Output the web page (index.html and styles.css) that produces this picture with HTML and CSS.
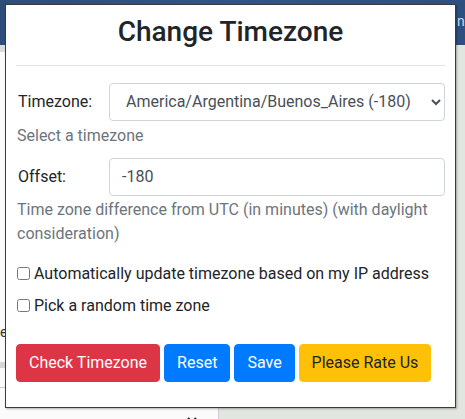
FILE: index.html
```html
<!DOCTYPE html>
<html>
<head>
<meta charset="utf-8">
<link rel="stylesheet" href="styles.css">
</head>
<body>
<div class="page">
  <div class="page-header"><span class="header-text">n</span></div>
  <div class="page-main">
    <div class="sidebar">
      <div class="sidebar-band"></div>
      <div class="sidebar-text">e</div>
      <div class="sidebar-band2"></div>
      <div class="sidebar-line"></div>
      <div class="sidebar-select"><svg width="10" height="7" viewBox="0 0 10 7"><path d="M1 1l4 4 4-4" fill="none" stroke="#222" stroke-width="2"/></svg></div>
    </div>
    <div class="map"></div>
  </div>
</div>

<div class="popup">
  <h3 class="title">Change Timezone</h3>
  <hr class="divider">
  <div class="field">
    <label class="field-label" for="tz">Timezone:</label>
    <select id="tz" class="control control-select">
      <option>America/Argentina/Buenos_Aires (-180)</option>
    </select>
  </div>
  <div class="help help-first">Select a timezone</div>
  <div class="field field-offset">
    <label class="field-label" for="offset">Offset:</label>
    <input id="offset" class="control" type="text" value="-180">
  </div>
  <div class="help help-second">Time zone difference from UTC (in minutes) (with daylight consideration)</div>
  <label class="check check-first"><input type="checkbox" class="check-box">Automatically update timezone based on my IP address</label>
  <label class="check check-second"><input type="checkbox" class="check-box">Pick a random time zone</label>
  <div class="actions">
    <button class="btn btn-red">Check Timezone</button>
    <button class="btn btn-blue">Reset</button>
    <button class="btn btn-blue">Save</button>
    <button class="btn btn-yellow">Please Rate Us</button>
  </div>
</div>
</body>
</html>
```

FILE: styles.css
```css
html, body {
  margin: 0;
  padding: 0;
}
body {
  width: 465px;
  height: 419px;
  position: relative;
  overflow: hidden;
  font-family: Roboto, "Liberation Sans", sans-serif;
  background: #f7f7f7;
}
.page {
  display: flex;
  flex-direction: column;
  height: 419px;
}
.page-header {
  height: 45px;
  background: linear-gradient(90deg, #2d4e7b 0%, #30548a 50%, #2e5080 100%);
  position: relative;
}
.header-text {
  position: absolute;
  left: 457px;
  top: 13px;
  color: #c9d6e8;
  font-size: 14px;
}
.page-main {
  flex: 1;
  display: flex;
}
.sidebar {
  width: 218px;
  background: #fbfbfb;
  position: relative;
}
.sidebar-band {
  height: 7px;
  background: #dcdcdc;
}
.sidebar-text {
  margin-top: 272px;
  font-size: 14px;
  color: #333;
  margin-left: 0;
}
.sidebar-band2 {
  margin-top: 22px;
  height: 6px;
  background: #d8d8d8;
}
.sidebar-line {
  margin-top: 19px;
  height: 1px;
  background: #cccccc;
}
.sidebar-select {
  position: absolute;
  left: 187px;
  top: 364px;
}
.map {
  flex: 1;
  background: #e2e6e1;
  border-left: 1px solid #d0d0d0;
}

.popup {
  position: absolute;
  left: 5px;
  top: 4px;
  width: 451px;
  height: 404px;
  box-sizing: border-box;
  background: #fff;
  border: 1px solid #3b3b3b;
  box-shadow: 1px 1px 2px rgba(0,0,0,0.3);
  padding: 10px 10px 0 10px;
  color: #212529;
  font-size: 16px;
  line-height: 24px;
}
.title {
  margin: 0;
  font-size: 28px;
  font-weight: 500;
  line-height: 33.6px;
  text-align: center;
  color: #212529;
}
.divider {
  margin: 16px 0 17px 0;
  border: 0;
  border-top: 1px solid #e3e3e3;
}
.field {
  display: grid;
  grid-template-columns: 93px 1fr;
  align-items: center;
}
.field-label {
  padding-left: 2px;
}
.control {
  box-sizing: border-box;
  height: 38px;
  width: 100%;
  margin: 0;
  padding: 6px 12px;
  font-family: Roboto, "Liberation Sans", sans-serif;
  font-size: 16px;
  line-height: 24px;
  color: #495057;
  background: #fff;
  border: 1px solid #ced4da;
  border-radius: 4px;
}
.control-select {
  text-align: center;
  text-align-last: center;
  padding-left: 12px;
  padding-right: 18px;
}
.help {
  color: #6c757d;
  padding-left: 1px;
}
.help-first {
  margin-top: 3px;
}
.field-offset {
  margin-top: 10px;
}
.help-second {
  margin-top: 2px;
}
.check {
  display: flex;
  align-items: center;
  height: 24px;
}
.check-first {
  margin-top: 16px;
}
.check-second {
  margin-top: 8px;
}
.check-box {
  margin: 0 4px 0 1px;
  width: 13px;
  height: 13px;
}
.actions {
  display: flex;
  gap: 4px;
  margin-top: 26px;
}
.btn {
  font-family: Roboto, "Liberation Sans", sans-serif;
  font-size: 16px;
  line-height: 24px;
  padding: 6px 12px;
  border: 1px solid transparent;
  border-radius: 4px;
  color: #fff;
}
.btn-red {
  background: #dc3545;
  border-color: #dc3545;
}
.btn-blue {
  background: #007bff;
  border-color: #007bff;
}
.btn-yellow {
  background: #ffc107;
  border-color: #ffc107;
  color: #212529;
}
```
